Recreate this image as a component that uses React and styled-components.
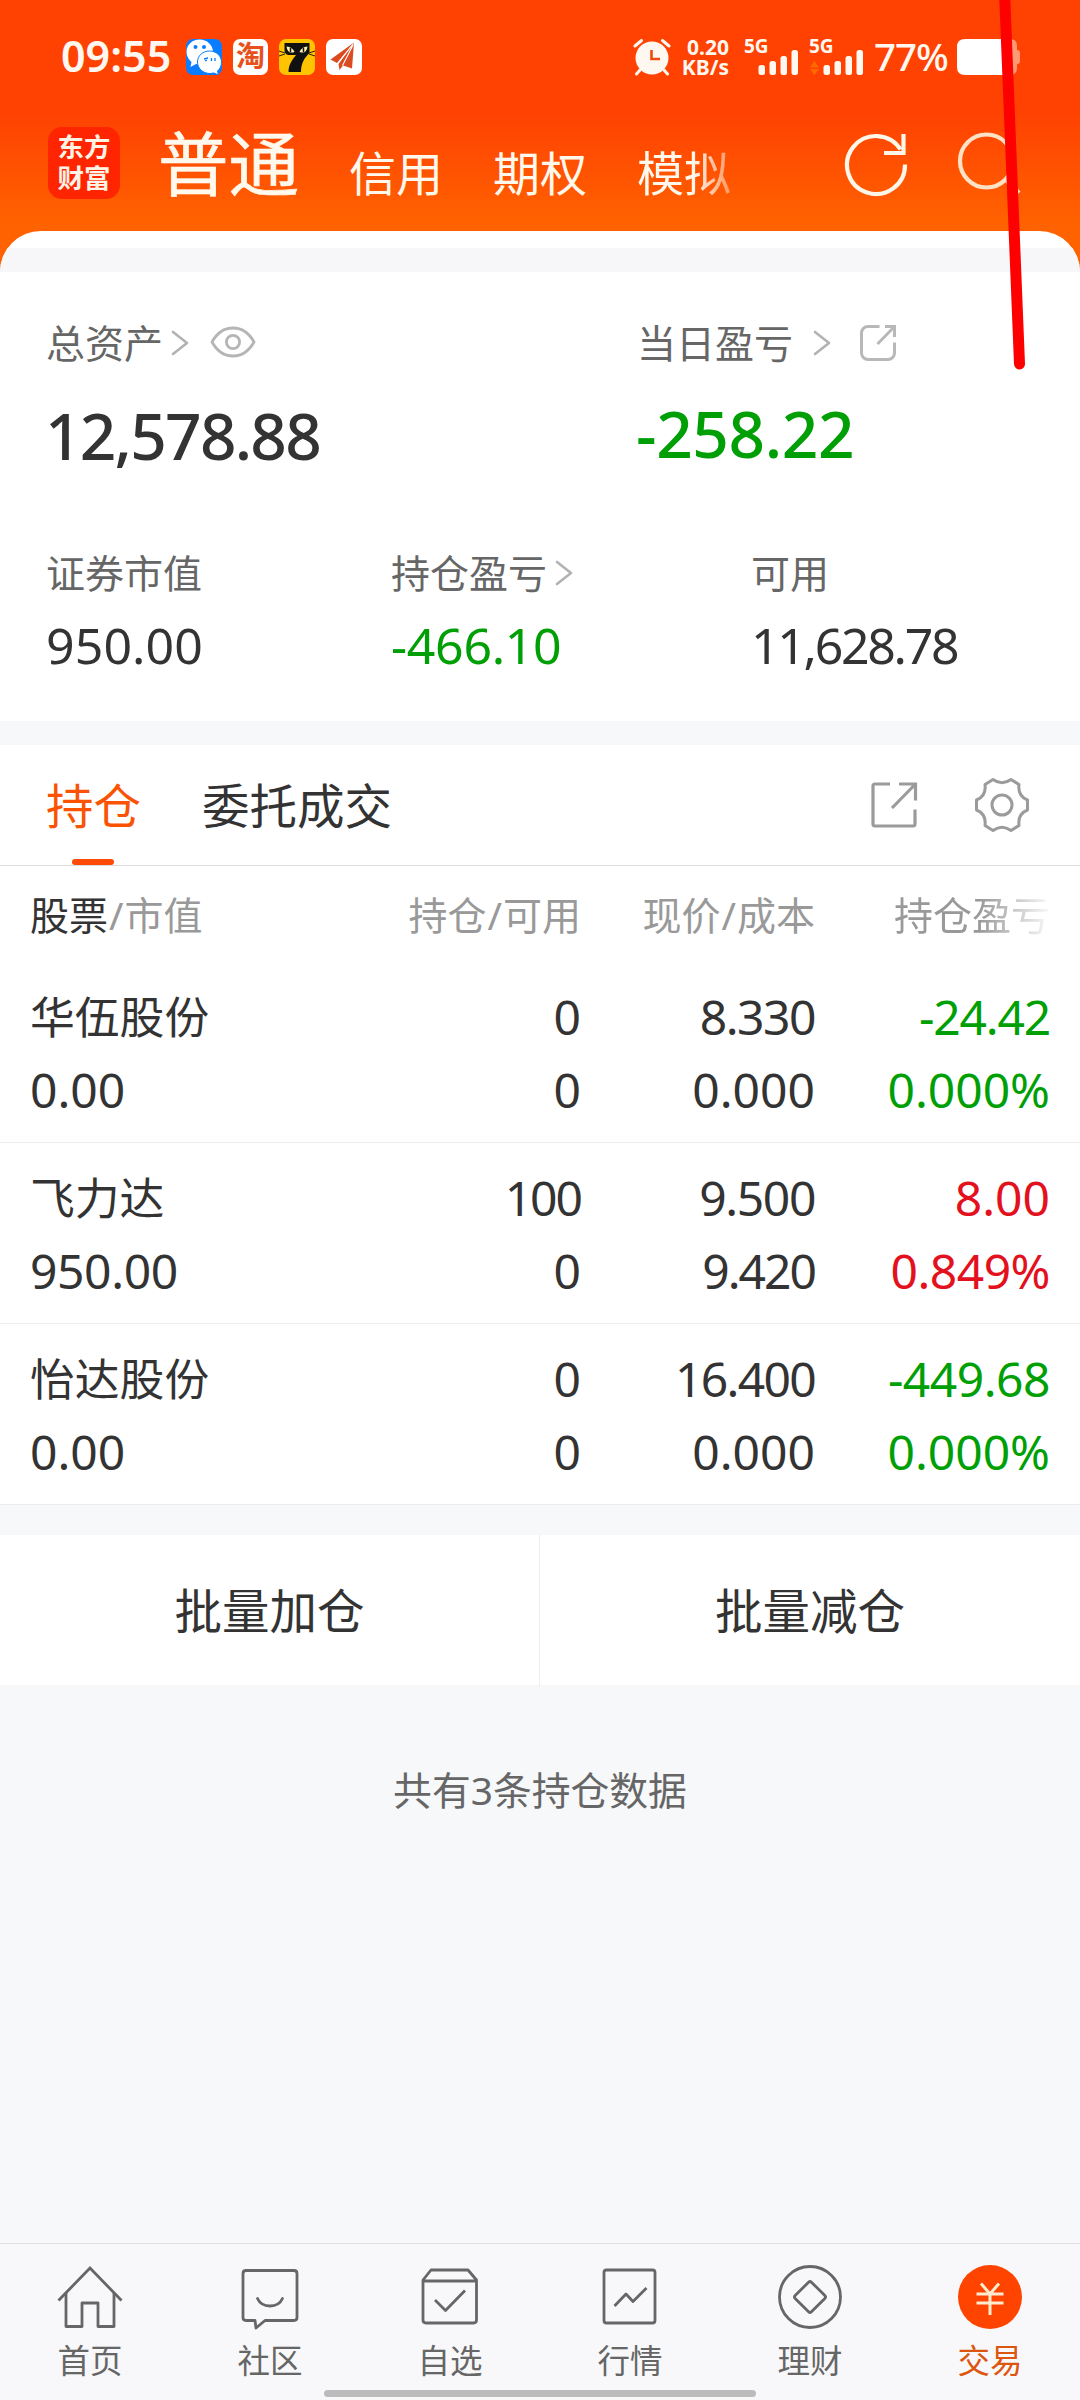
import styled, { createGlobalStyle } from "styled-components";

const summary = [
    { label: "证券市值", value: "950.00", spacing: 0.1 },
    { label: "持仓盈亏", value: "-466.10", tone: "down", arrow: true, spacing: -0.3 },
    { label: "可用", value: "11,628.78", spacing: -2.3 }
];

const holdings = [
    {
        name: "华伍股份",
        tone: "down",
        cells: [["0"], ["8.330", -1.5], ["-24.42", -1.2], ["0.00"], ["0"], ["0.000"], ["0.000%"]]
    },
    {
        name: "飞力达",
        tone: "up",
        cells: [["100", -2], ["9.500", -1.4], ["8.00"], ["950.00", -0.4], ["0"], ["9.420", -2], ["0.849%", -0.5]]
    },
    {
        name: "怡达股份",
        tone: "down",
        cells: [["0"], ["16.400", -1.7], ["-449.68", -0.5], ["0.00"], ["0"], ["0.000"], ["0.000%"]]
    }
];

const tones = {
    up: "#E3111D",
    down: "#009F05"
};

const Chevron = () => (
    <svg width="18" height="26" viewBox="0 0 18 26" fill="none" stroke="#B2B2B2" strokeWidth="2.6" strokeLinecap="round" strokeLinejoin="round">
        <path d="M2 2 L16 13 L2 24" />
    </svg>
);

const EyeIcon = () => (
    <svg width="46" height="34" viewBox="0 0 46 34" fill="none" stroke="#B5B5B5" strokeWidth="2.8">
        <path d="M2 17 C7 8 14 3 23 3 S39 8 44 17 C39 26 32 31 23 31 S7 26 2 17 Z" strokeLinejoin="round" />
        <circle cx="23" cy="17" r="6.6" />
    </svg>
);

const ShareRounded = () => (
    <svg width="38" height="38" viewBox="0 0 38 38" fill="none" stroke="#B8B8B8" strokeWidth="3">
        <path d="M20.5 2.5 H9 A6.5 6.5 0 0 0 2.5 9 V29 A6.5 6.5 0 0 0 9 35.5 H29 A6.5 6.5 0 0 0 35.5 29 V18.5" />
        <path d="M26 2.5 H35.5 V13 M35.5 2.5 L18.5 20" />
    </svg>
);

const ShareSquare = () => (
    <svg width="48" height="48" viewBox="0 0 48 48" fill="none" stroke="#9B9B9B" strokeWidth="3.2">
        <path d="M20 3 H5 Q3 3 3 5 V43 Q3 45 5 45 H43 Q45 45 45 43 V28.5" />
        <path d="M29 3 H45.5 V19.5 M45 3.5 L22 27" />
    </svg>
);

const GearIcon = () => (
    <svg width="56" height="56" viewBox="0 0 56 56" fill="none" stroke="#9B9B9B" strokeWidth="3" strokeLinejoin="round">
        <path d="M19 2.5 Q28 9 37 2.5 L45 7.5 Q43.5 19 53.5 23 V33 Q43.5 37 45 48.5 L37 53.5 Q28 47 19 53.5 L11 48.5 Q12.500 37 2.5 33 V23 Q12.5 19 11 7.5 Z" />
        <circle cx="28" cy="28" r="10" />
    </svg>
);

const RefreshIcon = () => (
    <svg width="66" height="66" viewBox="0 0 66 66" fill="none" stroke="#FFF6EA" strokeWidth="4.2">
        <path d="M62 33.5 A29 29 0 1 1 57.5 18.5" />
        <path d="M60.5 3 V22 H41" />
    </svg>
);

const SearchIcon = () => (
    <svg width="66" height="66" viewBox="0 0 66 66" fill="none" stroke="#FFE2C6" strokeWidth="4.2">
        <circle cx="30.5" cy="30" r="26.5" />
        <path d="M50 49 L63 62" />
    </svg>
);

const WechatIcon = () => (
    <svg width="36" height="36" viewBox="0 0 36 36">
        <rect width="36" height="36" rx="7" fill="#0A7CFF" />
        <path d="M13.5 0.5 C6 0.5 0.5 6 0.5 13 C0.5 17 2.5 20.5 5.5 23 L4.5 28 L10 25 C20 27 27 20 27 13 C27 6 21 0.5 13.5 0.5 Z" fill="#FFF" />
        <circle cx="9.5" cy="8" r="2" fill="#0A7CFF" />
        <circle cx="18" cy="8" r="2" fill="#0A7CFF" />
        <path d="M23.5 12 C16.5 12 11.5 17 11.5 23 C11.5 29.5 17 34.5 24 34.5 L28 34 L32.5 36 L31.5 32 C34 30 35.5 27 35.5 23 C35.5 17 30.5 12 23.5 12 Z" fill="#FFF" stroke="#0A7CFF" strokeWidth="1" />
        <path d="M18 20 L22 19 M19 22 L21 21 M25.5 19 V22 M29 19 V22" stroke="#0A7CFF" strokeWidth="1.3" />
    </svg>
);

const CatIcon = () => (
    <svg width="36" height="36" viewBox="0 0 36 36">
        <rect width="36" height="36" rx="7" fill="#FFC400" />
        <path d="M5.5 4 H30.5 V14 C25 19 22 25 22 33 H9.5 C9.5 26 13 21 17 16 H9 Q5.5 15 5.5 11 Z" fill="#111" />
        <path d="M7.500 7.500 Q13.500 8 15.5 13 Q8.500 15.500 7.500 7.500 Z M28.500 7.500 Q22.500 8 20.500 13 Q27.500 15.500 28.500 7.500 Z" fill="#FFF3B0" />
        <path d="M11.5 9 V13 M24.5 9 V13" stroke="#111" strokeWidth="1.5" />
        <path d="M0 12 L6 14 M0 17 L6 15 M36 12 L30 14 M36 17 L30 15" stroke="#111" strokeWidth="0.9" />
    </svg>
);

const PlaneIcon = () => (
    <svg width="36" height="36" viewBox="0 0 36 36">
        <rect width="36" height="36" rx="7" fill="#FFF" />
        <path d="M28 3.5 L4.500 20.500 L11 24 Z M28 3.5 L12.500 25 L13.500 31 L17 26.500 L26 29.500 Z" fill="#DC4A20" />
        <path d="M27.500 4.500 L11.500 25 M27 6 L16.500 26.500" stroke="#FFF" strokeWidth="1.1" />
    </svg>
);

const AlarmIcon = () => (
    <svg width="38" height="38" viewBox="0 0 38 38" fill="none" stroke="#FFF8F0" strokeLinecap="round">
        <circle cx="19" cy="20" r="16.5" fill="#FFF8F0" stroke="none" />
        <path d="M2 8 L8.5 2.5 M36 8 L29.5 2.5 M7 32 L3.5 36 M31 32 L34.5 36" strokeWidth="3" />
        <path d="M18.5 12 V21 H27" stroke="#F04A0C" strokeWidth="2.6" strokeLinecap="butt" />
    </svg>
);

const SignalIcon = ({ active }) => (
    <svg width="56" height="26" viewBox="0 0 56 26" fill="#FFF8F0">
        {active && <path d="M5.500 12 L10 18.500 H1 Z M5.500 26 L10 20 H1 Z" fill="#FF6A00" />}
        <rect x="14.5" y="16" width="6.5" height="10" rx="2.5" />
        <rect x="25.5" y="12" width="6.5" height="14" rx="2.5" />
        <rect x="36.5" y="7" width="6.5" height="19" rx="2.5" />
        <rect x="47.5" y="1" width="6.5" height="25" rx="2.5" />
    </svg>
);

const BatteryIcon = () => (
    <svg width="64" height="36" viewBox="0 0 64 36">
        <path d="M44 0 H53 Q60 0 60 7 V11 Q63 11 63 14 V22 Q63 25 60 25 V29 Q60 36 53 36 H44 Z" fill="#FF9A74" />
        <path d="M8 0 H50 V36 H8 Q0 36 0 28 V8 Q0 0 8 0 Z" fill="#FFF" />
    </svg>
);

const HomeIcon = () => (
    <svg width="66" height="66" viewBox="0 0 66 66" fill="none" stroke="#666" strokeWidth="2.8">
        <path d="M1.5 36.5 L33 4 L64.5 36.5" />
        <path d="M9 29 V62.5 H25 V39 H41 V62.5 H57 V29" strokeLinejoin="round" />
    </svg>
);

const ChatIcon = () => (
    <svg width="66" height="66" viewBox="0 0 66 66" fill="none" stroke="#666" strokeWidth="2.8" strokeLinejoin="round">
        <path d="M8 6.5 H57 Q60 6.5 60 9.5 V53.5 Q60 56.5 57 56.5 H28 L19 64 L18 56.5 H9 Q6 56.5 6 53.5 V9.5 Q6 6.5 9 6.5" />
        <path d="M20.500 34.500 C25 44.500 41 44.500 45.500 34.500" strokeLinecap="round" />
    </svg>
);

const CheckBoxIcon = () => (
    <svg width="66" height="66" viewBox="0 0 66 66" fill="none" stroke="#666" strokeWidth="2.8" strokeLinejoin="round">
        <path d="M6 16 L14 6 H51 L59.5 16 V56 Q59.5 59 56.5 59 H9 Q6 59 6 56 Z M6 17 H59" />
        <path d="M18 36 L28.5 46.5 L48 26.5" />
    </svg>
);

const TrendIcon = () => (
    <svg width="66" height="66" viewBox="0 0 66 66" fill="none" stroke="#666" strokeWidth="2.8" strokeLinejoin="round">
        <rect x="7" y="6" width="51" height="53" rx="2.5" />
        <path d="M17.5 42 L29 30 L36 37.5 L49.5 24" />
    </svg>
);

const WealthIcon = () => (
    <svg width="66" height="66" viewBox="0 0 66 66" fill="none" stroke="#666" strokeWidth="2.8" strokeLinejoin="round">
        <circle cx="33" cy="33" r="30.5" />
        <rect x="21.5" y="21.5" width="23" height="23" rx="2" transform="rotate(45 33 33)" />
    </svg>
);

const TradeIcon = () => (
    <svg width="66" height="66" viewBox="0 0 66 66" fill="none">
        <circle cx="33" cy="33" r="32" fill="#FF4400" />
        <path d="M24 19.5 L33 30 L42 19.5 M19.5 30 H46.5 M19.5 39 H46.5 M33 30 V51" stroke="#FFEBCF" strokeWidth="3" />
    </svg>
);

const navItems = [
    { label: "首页", Icon: HomeIcon },
    { label: "社区", Icon: ChatIcon },
    { label: "自选", Icon: CheckBoxIcon },
    { label: "行情", Icon: TrendIcon },
    { label: "理财", Icon: WealthIcon },
    { label: "交易", Icon: TradeIcon, active: true }
];

const StatusBar = () => (
    <StatusRow>
        <Clock>09:55</Clock>
        <NoticeIcons>
            <WechatIcon />
            <TaobaoBadge>淘</TaobaoBadge>
            <CatIcon />
            <PlaneIcon />
        </NoticeIcons>
        <StatusRight>
            <AlarmIcon />
            <NetSpeed>
                <span>0.20</span>
                <span>KB/s</span>
            </NetSpeed>
            <Signal>
                <SignalLabel>5G</SignalLabel>
                <SignalIcon />
            </Signal>
            <Signal>
                <SignalLabel>5G</SignalLabel>
                <SignalIcon active />
            </Signal>
            <BatteryText>77%</BatteryText>
            <BatteryIcon />
        </StatusRight>
    </StatusRow>
);

const App = () => {
    return (
        <Page>
            <GlobalStyle />
            <Header>
                <StatusBar />
                <TopBar>
                    <Logo>
                        <span>东方</span>
                        <span>财富</span>
                    </Logo>
                    <AccountTabs>
                        <AccountTab $active>普通</AccountTab>
                        <AccountTab>信用</AccountTab>
                        <AccountTab>期权</AccountTab>
                        <AccountTab $fade>模拟</AccountTab>
                    </AccountTabs>
                    <TopActions>
                        <RefreshIcon />
                        <SearchIcon />
                    </TopActions>
                </TopBar>
                <SheetTop>
                    <SheetBand />
                </SheetTop>
            </Header>

            <Assets>
                <TotalRow>
                    <Total>
                        <Label $gap={8}>
                            总资产
                            <Chevron />
                            <EyeSlot>
                                <EyeIcon />
                            </EyeSlot>
                        </Label>
                        <TotalValue $spacing={-1.8}>12,578.88</TotalValue>
                    </Total>
                    <Total $gap={19}>
                        <Label $gap={20}>
                            当日盈亏
                            <Chevron />
                            <ShareSlot>
                                <ShareRounded />
                            </ShareSlot>
                        </Label>
                        <TotalValue $tone="down" $spacing={-0.4}>-258.22</TotalValue>
                    </Total>
                </TotalRow>
                <SummaryRow>
                    {summary.map((item) => (
                        <div key={item.label}>
                            <Label $gap={8}>
                                {item.label}
                                {item.arrow && <Chevron />}
                            </Label>
                            <SummaryValue $tone={item.tone} $spacing={item.spacing}>
                                {item.value}
                            </SummaryValue>
                        </div>
                    ))}
                </SummaryRow>
            </Assets>

            <Band $height={24} />

            <TabBar>
                <Tab $active>持仓</Tab>
                <Tab>委托成交</Tab>
                <TabActions>
                    <ShareSquare />
                    <GearIcon />
                </TabActions>
            </TabBar>

            <TableHead>
                <HeadCell><b>股票</b><i>/</i>市值</HeadCell>
                <HeadCell>持仓<i>/</i>可用</HeadCell>
                <HeadCell>现价<i>/</i>成本</HeadCell>
                <HeadCell $fade>持仓盈亏</HeadCell>
            </TableHead>
            {holdings.map(({ name, tone, cells }) => (
                <HoldingRow key={name}>
                    <StockName>{name}</StockName>
                    {cells.map(([text, spacing], index) => (
                        <Cell key={index} $tone={index === 2 || index === 6 ? tone : ""} $spacing={spacing}>
                            {text}
                        </Cell>
                    ))}
                </HoldingRow>
            ))}

            <Band $height={30} />
            <BatchRow>
                <BatchButton>批量加仓</BatchButton>
                <BatchButton>批量减仓</BatchButton>
            </BatchRow>
            <CountText>共有3条持仓数据</CountText>

            <BottomNav>
                {navItems.map(({ label, Icon, active }) => (
                    <NavItem key={label} $active={active}>
                        <Icon />
                        <span>{label}</span>
                    </NavItem>
                ))}
                <HomeIndicator />
            </BottomNav>

            <Stroke width="40" height="380" viewBox="0 0 40 380">
                <path d="M14.5 -8 L29.5 364" stroke="#FF0000" strokeWidth="11" strokeLinecap="round" />
            </Stroke>
        </Page>
    );
};

export default App;

const GlobalStyle = createGlobalStyle`
    * {
        box-sizing: border-box;
    }

    body {
        margin: 0;
        font-family: "Noto Sans", "Noto Sans CJK SC", sans-serif;
    }

    svg {
        display: block;
        flex-shrink: 0;
    }
`;

const Page = styled.div`
    position: relative;
    display: flex;
    flex-direction: column;
    width: 1080px;
    height: 2400px;
    overflow: hidden;
    background: #F7F8FA;
    color: #333;
`;

const Header = styled.header`
    height: 272px;
    background: linear-gradient(#FF4102 0, #FF4102 110px, #FF6200 225px);
`;

const StatusRow = styled.div`
    display: flex;
    align-items: center;
    height: 113px;
    padding: 0 59px 0 61px;
    color: #FFF8F0;
`;

const Clock = styled.div`
    width: 125px;
    margin-top: -2px;
    font-size: 43px;
    font-weight: 600;
`;

const NoticeIcons = styled.div`
    display: flex;
    gap: 11px;
`;

const TaobaoBadge = styled.div`
    width: 35px;
    height: 36px;
    border-radius: 7px;
    background: #FFF;
    color: #E8501B;
    font-size: 29px;
    font-weight: 700;
    line-height: 34px;
    text-align: center;
`;

const StatusRight = styled.div`
    display: flex;
    align-items: center;
    margin-left: auto;
`;

const NetSpeed = styled.div`
    display: flex;
    flex-direction: column;
    width: 48px;
    margin: 0 15px 0 10px;
    font-size: 21px;
    font-weight: 700;
    line-height: 20px;
    text-align: right;
`;

const Signal = styled.div`
    position: relative;
    display: flex;
    align-items: flex-end;
    width: 56px;
    height: 36px;
    margin-right: 9px;
`;

const SignalLabel = styled.span`
    position: absolute;
    top: -2px;
    left: 0;
    font-size: 19px;
    font-weight: 700;
    line-height: 19px;
`;

const BatteryText = styled.div`
    width: 83px;
    margin-top: -2px;
    font-size: 38.5px;
    font-weight: 500;
    letter-spacing: -1px;
    white-space: nowrap;
`;

const TopBar = styled.div`
    display: flex;
    height: 118px;
    padding: 14px 58px 0 48px;
`;

const Logo = styled.div`
    display: flex;
    flex-direction: column;
    justify-content: center;
    width: 72px;
    height: 72px;
    border-radius: 14px;
    background: #FF2500;
    color: #FFF3E6;
    font-size: 26.5px;
    font-weight: 700;
    line-height: 31px;
    text-align: center;
`;

const AccountTabs = styled.nav`
    display: flex;
    align-items: baseline;
    gap: 50px;
    margin-left: 38px;
    height: 90px;
`;

const AccountTab = styled.div`
    font-size: ${({ $active }) => ($active ? "70.5px" : "47px")};
    line-height: 74px;
    color: #FFF8EC;
    ${({ $active }) => $active && "-webkit-text-stroke: 0.7px #FFF8EC;"}
    ${({ $fade }) => $fade && "mask-image: linear-gradient(90deg, #000 60%, rgba(0, 0, 0, 0.4) 100%);"}
`;

const TopActions = styled.div`
    display: flex;
    gap: 47px;
    margin: 4px 0 0 auto;
`;

const SheetTop = styled.div`
    height: 41px;
    padding-top: 17px;
    border-radius: 47px 47px 0 0;
    background: #FFF;
    overflow: hidden;
`;

const SheetBand = styled.div`
    height: 24px;
    background: #F7F7FA;
`;

const Assets = styled.section`
    height: 449px;
    padding: 43px 46px 0;
    background: #FFF;
`;

const TotalRow = styled.div`
    display: grid;
    grid-template-columns: 591px 1fr;
    height: 230px;
`;

const Total = styled.div`
    display: flex;
    flex-direction: column;
    gap: ${({ $gap = 21 }) => $gap}px;
`;

const Label = styled.div`
    display: flex;
    align-items: center;
    gap: ${({ $gap }) => $gap}px;
    height: 56px;
    font-size: 39px;
    line-height: 56px;
    color: #666;
`;

const EyeSlot = styled.div`
    margin: -2px 0 0 13px;
`;

const ShareSlot = styled.div`
    margin: -1px 0 0 8px;
`;

const TotalValue = styled.div`
    margin-left: -1px;
    font-size: 64px;
    font-weight: 500;
    line-height: 88px;
    letter-spacing: ${({ $spacing }) => $spacing}px;
    color: ${({ $tone }) => tones[$tone] || "#333"};
`;

const SummaryRow = styled.div`
    display: grid;
    grid-template-columns: 345px 360px 1fr;
`;

const SummaryValue = styled.div`
    margin-top: 10px;
    font-size: 50px;
    line-height: 68px;
    letter-spacing: ${({ $spacing }) => $spacing}px;
    color: ${({ $tone }) => tones[$tone] || "#333"};
`;

const Band = styled.div`
    height: ${({ $height }) => $height}px;
    background: #F7F8FA;
`;

const TabBar = styled.div`
    display: flex;
    height: 121px;
    padding: 0 50px 0 46px;
    gap: 61px;
    background: #FFF;
    border-bottom: 1px solid #DCDCDC;
`;

const Tab = styled.div`
    position: relative;
    height: 121px;
    font-size: 47.5px;
    line-height: 121px;
    color: ${({ $active }) => ($active ? "#F95303" : "#333")};

    &::after {
        content: "";
        display: ${({ $active }) => ($active ? "block" : "none")};
        position: absolute;
        bottom: 1px;
        left: 26px;
        width: 42px;
        height: 6px;
        border-radius: 3px;
        background: #FD4A04;
    }
`;

const TabActions = styled.div`
    display: flex;
    align-items: center;
    gap: 56px;
    margin-left: auto;
`;

const columns = "251px 300px 234px 235px";

const TableHead = styled.div`
    display: grid;
    grid-template-columns: ${columns};
    height: 96px;
    padding-left: 30px;
    background: #FFF;
`;

const HeadCell = styled.div`
    font-size: 39px;
    line-height: 98px;
    color: #999;
    text-align: right;
    white-space: nowrap;
    ${({ $fade }) => $fade && "mask-image: linear-gradient(90deg, #000 70%, transparent 102%);"}

    &:first-child {
        text-align: left;
    }

    b {
        font-weight: 400;
        color: #333;
    }

    i {
        margin: 0 1px;
        font-style: normal;
    }
`;

const HoldingRow = styled.div`
    display: grid;
    grid-template-columns: ${columns};
    grid-template-rows: 73px 73px;
    height: 181px;
    padding: 18px 0 0 30px;
    background: #FFF;
    border-bottom: 1px solid #ECECEC;
`;

const StockName = styled.div`
    font-size: 44.8px;
    line-height: 73px;
`;

const Cell = styled.div`
    font-size: 48px;
    line-height: 73px;
    text-align: right;
    letter-spacing: ${({ $spacing = 0 }) => $spacing}px;
    color: ${({ $tone }) => tones[$tone] || "#333"};

    &:nth-child(5) {
        text-align: left;
    }
`;

const BatchRow = styled.div`
    display: grid;
    grid-template-columns: 540px 540px;
    height: 150px;
    background: #FFF;
`;

const BatchButton = styled.div`
    font-size: 47.5px;
    line-height: 152px;
    text-align: center;

    &:first-child {
        border-right: 1px solid #EEE;
    }
`;

const CountText = styled.div`
    padding-top: 77px;
    font-size: 38.8px;
    line-height: 56px;
    text-align: center;
    color: #666;
`;

const BottomNav = styled.nav`
    position: relative;
    display: grid;
    grid-template-columns: repeat(6, 1fr);
    height: 157px;
    margin-top: auto;
    border-top: 1px solid #E2E2E4;
    background: #F8F8FA;
`;

const NavItem = styled.div`
    display: flex;
    flex-direction: column;
    align-items: center;
    gap: 9px;
    padding-top: 20px;
    font-size: 32.5px;
    line-height: 44px;
    color: ${({ $active }) => ($active ? "#DC560F" : "#666")};
`;

const HomeIndicator = styled.div`
    position: absolute;
    bottom: 3px;
    left: 324px;
    width: 432px;
    height: 7px;
    border-radius: 4px;
    background: #BBB;
`;

const Stroke = styled.svg`
    position: absolute;
    top: 0;
    left: 990px;
`;
